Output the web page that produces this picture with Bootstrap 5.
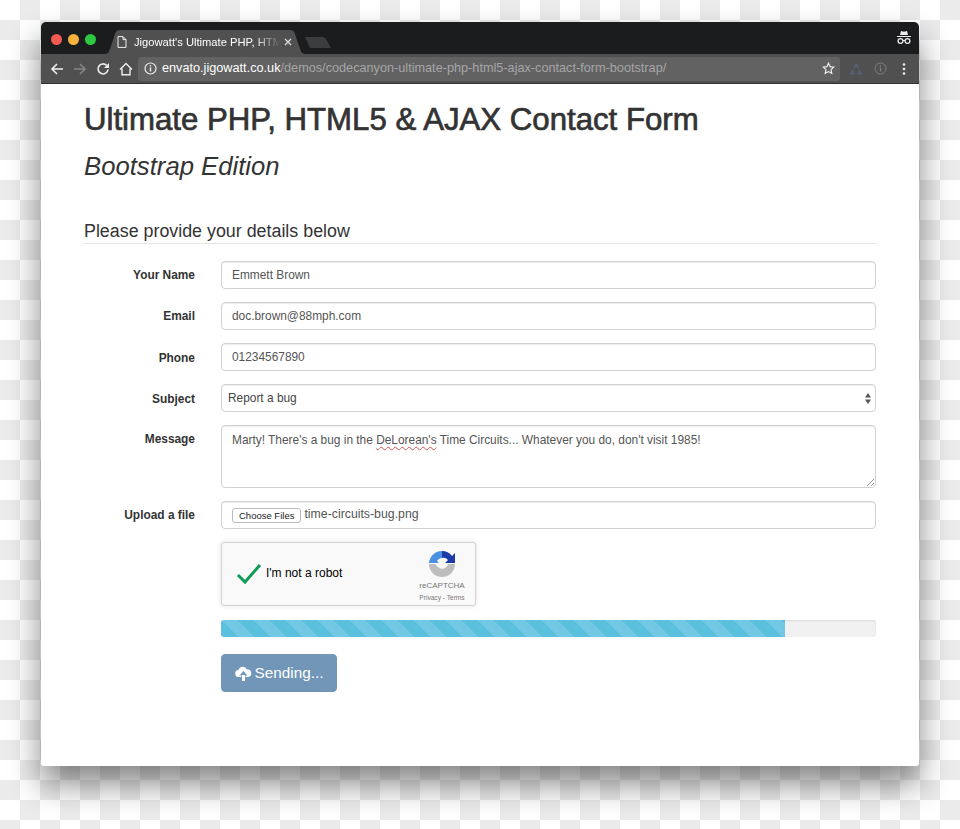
<!DOCTYPE html>
<html lang="en">
<head>
    <meta charset="UTF-8">
    <meta name="viewport" content="width=device-width, initial-scale=1.0">
    <title>Ultimate PHP, HTML5 &amp; AJAX Contact Form</title>
    <link href="https://cdn.jsdelivr.net/npm/bootstrap@5.3.0/dist/css/bootstrap.min.css" rel="stylesheet">
    <style>
        html, body { height: 100%; }
        body {
            margin: 0;
            padding: 22px 41px 0;
            overflow: hidden;
            font-family: "Liberation Sans", Arial, sans-serif;
            color: #333;
            background: repeating-conic-gradient(#ebebeb 0 25%, #fff 0 50%) 0 0 / 40px 40px;
        }
        .browser-win {
            height: 744px;
            background: #fff;
            border-radius: 5px 5px 3px 3px;
            box-shadow: 0 18px 32px rgba(0,0,0,.48);
            overflow: hidden;
        }
        .title-strip { height: 32px; background: #1b1c1e; padding-left: 10px; }
        .light-group { padding-top: 12px; }
        .light { width: 11px; height: 11px; border-radius: 50%; margin-right: 6px; }
        .light-red { background: #f25a52; }
        .light-yellow { background: #f5b13c; }
        .light-green { background: #2cc840; }
        .tab-shape { width: 203px; height: 24px; margin-left: 2px; color: #fff; font-size: 11.2px; position: relative; flex-shrink: 0; }
        .tab-shape > svg.tab-bg { position: absolute; left: 0; top: 0; }
        .tab-inner { position: relative; height: 24px; padding: 0 15px 0 13px; }
        .tab-label {
            width: 148px; margin-left: 7px; white-space: nowrap; color: #fff;
            -webkit-mask-image: linear-gradient(90deg, #000 120px, transparent 147px);
            mask-image: linear-gradient(90deg, #000 120px, transparent 147px);
        }
        .new-tab { margin-left: -3px; margin-bottom: 6px; }
        .spy-icon { margin: 7px 7px 0 0; }
        .tool-strip { height: 30px; background: #505050; padding: 0 9px; border-bottom: 1px solid #333; }
        .nav-ico { margin-right: 9px; }
        .omni-box {
            width: 702px; height: 24px; background: #626262; border-radius: 3px;
            font-size: 12.7px; color: #a6a6a6; padding: 0 5px 0 6px; margin-left: -4px;
        }
        .omni-host { color: #fff; }
        .omni-info { margin-right: 5px; }
        .ext-ico { margin-left: 9px; }
        .info-ico { margin-left: 11px; }
        .dots-ico { margin-left: 15px; }
        .page-wrap { padding: 0 43px; }
        .page-title { font-size: 31.2px; line-height: 36px; font-weight: 400; -webkit-text-stroke: .7px #333; margin: 18px 0 0; color: #333; }
        .page-sub { font-size: 25.7px; line-height: 30px; font-style: italic; font-weight: 400; margin: 13px 0 0; color: #333; }
        .section-head {
            font-size: 17.85px; line-height: 20px; font-weight: 400; color: #333;
            margin: 40px 0 17px; padding-bottom: 2px; border-bottom: 1px solid #e5e5e5;
        }
        .form-row-x { margin-bottom: 13px; --bs-gutter-x: 30px; }
        .form-row-last { margin-bottom: 14px; }
        .field-label { font-size: 11.9px; font-weight: 700; text-align: right; padding-right: 11px; line-height: 28px; color: #333; }
        .field-shift { padding-top: 1px; margin-bottom: -1px; }
        .field-box {
            height: 28px; font-size: 11.9px; color: #555; padding: 0 10px;
            border: 1px solid #d2d2d2; border-radius: 4px; box-shadow: inset 0 1px 1px rgba(0,0,0,.075);
            font-family: inherit;
        }
        select.field-box {
            padding: 1px 6px 0; color: #444;
            background-image: url("data:image/svg+xml,%3Csvg xmlns='http://www.w3.org/2000/svg' width='7' height='12'%3E%3Cpath d='M3.5 0 7 5H0zM3.5 12 0 7h7z' fill='%23555'/%3E%3C/svg%3E");
            background-size: 6px 11px; background-position: right 4px center;
        }
        .msg-box { height: 63px; padding-top: 7px; line-height: 15px; position: relative; }
        .msg-grip { position: absolute; right: 1px; bottom: 1px; }
        .spell-err { text-decoration: underline wavy #d9534f 1px; text-underline-offset: 2px; }
        .file-field { font-size: 12.3px; }
        .file-name { line-height: 24px; }
        .file-btn {
            font-size: 9.5px; line-height: 13px; height: 15px; padding: 0 6px; color: #222; background: #fff;
            border: 1px solid #bbb; border-radius: 3px; margin-top: 6px; margin-right: 3px;
        }
        .captcha-box {
            width: 255px; height: 64px; background: #f9f9f9; border: 1px solid #d3d3d3; border-radius: 3px;
            box-shadow: 0 0 4px 1px rgba(0,0,0,.08); padding: 0 10px 0 14px; color: #000; font-size: 12px;
        }
        .captcha-text { margin-left: 4px; margin-top: -2px; }
        .captcha-brand { width: 46px; font-size: 8px; color: #777; line-height: 10px; padding-top: 4px; }
        .captcha-brand svg { margin-bottom: 3px; }
        .captcha-links { font-size: 6.6px; color: #777; margin-top: 2px; white-space: nowrap; }
        .send-bar { height: 17px; background: #f1f1f1; border-radius: 3px; margin-bottom: 17px; box-shadow: inset 0 1px 2px rgba(0,0,0,.1); }
        .send-fill { background-color: #5bc0de; background-size: 32px 32px; }
        .send-btn {
            width: 116px; height: 38px; padding: 0; font-size: 15.3px; color: #fff; border-radius: 4px;
            background: #7296b8; border: 1px solid #7296b8; gap: 3px;
        }
        .send-btn:disabled { background: #7296b8; border-color: #7296b8; color: #fff; opacity: 1; }
    </style>
</head>
<body>
    <div class="browser-win d-flex flex-column">
        <div class="title-strip d-flex align-items-end flex-shrink-0">
            <div class="d-flex align-self-start light-group">
                <span class="light light-red"></span><span class="light light-yellow"></span><span class="light light-green"></span>
            </div>
            <div class="tab-shape">
                <svg class="tab-bg" width="203" height="24"><path d="M0 24c4 0 5-2 6-5l5-15c1-3 2-4 5-4h170c3 0 4 1 5 4l5 15c1 3 2 5 7 5z" fill="#505050"/></svg>
                <div class="tab-inner d-flex align-items-center">
                    <svg width="10" height="12" viewBox="0 0 10 12" class="flex-shrink-0"><path d="M1 .6h5l3 3v7.8H1zM6 .6v3h3" fill="none" stroke="#eee" stroke-width="1"/></svg>
                    <span class="tab-label">Jigowatt's Ultimate PHP, HTML</span>
                    <svg width="8" height="8" viewBox="0 0 8 8" class="ms-auto"><path d="M1 1l6 6M7 1L1 7" stroke="#ddd" stroke-width="1.4"/></svg>
                </div>
            </div>
            <svg width="28" height="12" class="new-tab flex-shrink-0"><path d="M1 1h18c1 0 2 1 3 2l5 9H7c-1 0-2-1-2-2z" fill="#3b3c3e"/></svg>
            <svg class="ms-auto align-self-start spy-icon" width="16" height="16" viewBox="0 0 16 16"><path d="M4 6l1-4 3 .7L11 2l1 4zM1 7h14v1H1z" fill="#eee"/><circle cx="4.500" cy="12" r="2.400" fill="none" stroke="#eee" stroke-width="1.3"/><circle cx="11.500" cy="12" r="2.400" fill="none" stroke="#eee" stroke-width="1.3"/><path d="M7 11.500h2" stroke="#eee"/></svg>
        </div>
        <div class="tool-strip d-flex align-items-center flex-shrink-0">
            <svg width="14" height="14" viewBox="0 0 14 14" class="nav-ico"><path d="M13 7H2M7 2L2 7l5 5" fill="none" stroke="#eee" stroke-width="1.6"/></svg>
            <svg width="14" height="14" viewBox="0 0 14 14" class="nav-ico"><path d="M1 7h11M7 2l5 5-5 5" fill="none" stroke="#858585" stroke-width="1.6"/></svg>
            <svg width="14" height="14" viewBox="0 0 14 14" class="nav-ico"><path d="M12 7.500A5 5 0 1 1 10.600 3.400" fill="none" stroke="#eee" stroke-width="1.6"/><path d="M13 1v5H8z" fill="#eee"/></svg>
            <svg width="14" height="14" viewBox="0 0 14 14" class="nav-ico"><path d="M1 7.500L7 1.500l6 6M3 6.500v6.300h8V6.500" fill="none" stroke="#eee" stroke-width="1.4"/></svg>
            <div class="omni-box d-flex align-items-center">
                <svg width="13" height="13" viewBox="0 0 13 13" class="omni-info flex-shrink-0"><circle cx="6.500" cy="6.500" r="5.500" fill="none" stroke="#eee" stroke-width="1.2"/><path d="M6.500 5.600v4M6.500 3.200v1.300" stroke="#eee" stroke-width="1.4"/></svg>
                <span><span class="omni-host">envato.jigowatt.co.uk</span>/demos/codecanyon-ultimate-php-html5-ajax-contact-form-bootstrap/</span>
                <svg width="13" height="13" viewBox="0 0 14 14" class="ms-auto"><path d="M7 1.300l1.700 3.700 4 .5-3 2.700.8 4L7 10.300l-3.500 1.900.8-4-3-2.700 4-.5z" fill="none" stroke="#eee" stroke-width="1.3"/></svg>
            </div>
            <svg width="14" height="14" viewBox="0 0 14 14" class="ext-ico"><path d="M7 2l2.500 4M9.800 8l2 3.500H8.500M5.500 11.500H2.200L4.200 8M5 6l2-4" fill="none" stroke="#56606f" stroke-width="2"/></svg>
            <svg width="13" height="13" viewBox="0 0 13 13" class="info-ico"><circle cx="6.500" cy="6.500" r="5.500" fill="none" stroke="#808080" stroke-width="1"/><path d="M6.500 5.600v4M6.500 3.200v1.300" stroke="#808080" stroke-width="1.3"/></svg>
            <svg width="4" height="12" viewBox="0 0 4 12" class="dots-ico"><circle cx="2" cy="1.500" r="1.300" fill="#eee"/><circle cx="2" cy="6" r="1.300" fill="#eee"/><circle cx="2" cy="10.500" r="1.300" fill="#eee"/></svg>
        </div>
        <div class="page-wrap flex-grow-1">
            <h1 class="page-title">Ultimate PHP, HTML5 &amp; AJAX Contact Form</h1>
            <h2 class="page-sub">Bootstrap Edition</h2>
            <form onsubmit="return false">
                <h3 class="section-head">Please provide your details below</h3>
                <div class="row form-row-x">
                    <label class="col-2 field-label">Your Name</label>
                    <div class="col-10"><input type="text" class="form-control field-box" value="Emmett Brown"></div>
                </div>
                <div class="row form-row-x">
                    <label class="col-2 field-label">Email</label>
                    <div class="col-10"><input type="text" class="form-control field-box" value="doc.brown@88mph.com"></div>
                </div>
                <div class="row form-row-x">
                    <label class="col-2 field-label field-shift">Phone</label>
                    <div class="col-10"><input type="text" class="form-control field-box" value="01234567890"></div>
                </div>
                <div class="row form-row-x">
                    <label class="col-2 field-label field-shift">Subject</label>
                    <div class="col-10"><select class="form-select field-box"><option>Report a bug</option></select></div>
                </div>
                <div class="row form-row-x">
                    <label class="col-2 field-label">Message</label>
                    <div class="col-10">
                        <div class="form-control field-box msg-box">Marty! There's a bug in the <span class="spell-err">DeLorean's</span> Time Circuits... Whatever you do, don't visit 1985!
                            <svg class="msg-grip" width="8" height="8" viewBox="0 0 8 8"><path d="M1 8l7-7M5 8l3-3" stroke="#999" stroke-width="1"/></svg>
                        </div>
                    </div>
                </div>
                <div class="row form-row-x">
                    <label class="col-2 field-label">Upload a file</label>
                    <div class="col-10"><div class="form-control field-box file-field d-flex align-items-start"><button type="button" class="file-btn">Choose Files</button><span class="file-name">time-circuits-bug.png</span></div></div>
                </div>
                <div class="row form-row-x form-row-last">
                    <div class="col-10 offset-2">
                        <div class="captcha-box d-flex align-items-center">
                            <svg width="26" height="22" viewBox="0 0 26 22"><path d="M2 12l7 7L24 2" fill="none" stroke="#0f9d58" stroke-width="3"/></svg>
                            <span class="captcha-text">I'm not a robot</span>
                            <div class="captcha-brand ms-auto text-center d-flex flex-column align-items-center">
                                <svg width="28" height="28" viewBox="0 0 28 28"><path d="M1 13A13 13 0 0 1 14 1v7a6 6 0 0 0-5 3l2 2z" fill="#4a90e2"/><path d="M14 1a13 13 0 0 1 10 5l3-3v10H17l3-3a6 6 0 0 0-6-2z" fill="#1c3aa9"/><path d="M1 14h6l3 3a6 6 0 0 0 10-3h7a13 13 0 0 1-26 0z" fill="#bdbdbd"/></svg>
                                <span>reCAPTCHA</span>
                                <span class="captcha-links">Privacy - Terms</span>
                            </div>
                        </div>
                    </div>
                </div>
                <div class="row form-row-x">
                    <div class="col-10 offset-2">
                        <div class="progress send-bar"><div class="progress-bar progress-bar-striped send-fill" style="width:86.1%"></div></div>
                        <button type="button" class="btn btn-primary send-btn d-flex align-items-center justify-content-center" disabled>
                            <svg width="17" height="15" viewBox="0 0 17 15"><path d="M4 11a3.500 3.500 0 0 1-.5-7A4.500 4.500 0 0 1 12 3.500a3.700 3.700 0 0 1 1 7.500h-2.500V9.500h2L8.500 5 4.500 9.500h2V11zM7 9h3v6H7z" fill="#fff"/></svg>
                            Sending...
                        </button>
                    </div>
                </div>
            </form>
        </div>
    </div>
    <script src="https://cdn.jsdelivr.net/npm/bootstrap@5.3.0/dist/js/bootstrap.bundle.min.js"></script>
</body>
</html>
